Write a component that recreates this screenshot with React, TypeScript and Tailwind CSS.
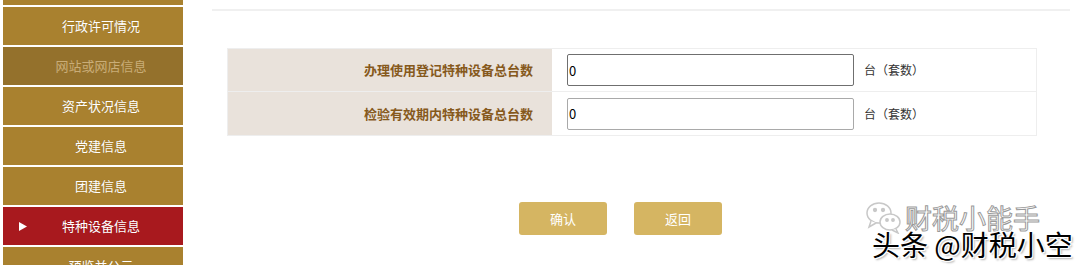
import React from "react";

const items = [
  { label: "年报基本信息", kind: "normal" },
  { label: "行政许可情况", kind: "normal" },
  { label: "网站或网店信息", kind: "disabled" },
  { label: "资产状况信息", kind: "normal" },
  { label: "党建信息", kind: "normal" },
  { label: "团建信息", kind: "normal" },
  { label: "特种设备信息", kind: "active" },
  { label: "预览并公示", kind: "normal" },
];

const font = { fontFamily: '"Microsoft YaHei", "Noto Sans CJK SC", "Noto Sans", sans-serif' };

function SideItem({ label, kind }: { label: string; kind: string }) {
  const bg =
    kind === "active" ? "bg-[#a8191e]" : kind === "disabled" ? "bg-[#94712c]" : "bg-[#a9812f]";
  const txt = kind === "disabled" ? "text-[#c9ad78]" : "text-white";
  return (
    <div className={`relative h-[38px] w-[180px] shrink-0 ${bg} flex items-center justify-center pl-[16px]`}>
      {kind === "active" && (
        <svg className="absolute left-[15px] top-[14px]" width="10" height="11" viewBox="0 0 10 11">
          <polygon points="1,1 9,5.5 1,10" fill="#ffffff" />
        </svg>
      )}
      <span className={`text-[13px] ${txt}`} style={{ textShadow: kind === "disabled" ? "none" : "0 0 1px rgba(0,0,0,0.15)" }}>
        {label}
      </span>
    </div>
  );
}

function Row({ label, dark }: { label: string; dark?: boolean }) {
  return (
    <div className="flex h-[43px] border-b border-[#eeeeee] last:border-b-0">
      <div className="w-[324px] shrink-0 bg-[#e9e2db] flex items-center justify-end pr-[19px]">
        <span className="text-[13px] font-bold text-[#86591c]">{label}</span>
      </div>
      <div className="flex items-center pl-[15px]">
        <input
          readOnly
          value="0"
          className={`h-[32px] w-[287px] border ${dark ? "border-[#6f6f6f]" : "border-[#a9a9a9]"} rounded-[2px] px-[1px] text-[13px] text-black outline-none bg-white`}
        />
        <span className="ml-[10px] text-[12px] text-[#333333]">台（套数）</span>
      </div>
    </div>
  );
}

export default function App() {
  return (
    <div className="relative w-[1080px] h-[265px] overflow-hidden bg-white flex" style={font}>
      <div className="w-[184px] shrink-0 pl-[3px] flex flex-col gap-[2px] -mt-[33px] bg-white">
        {items.map((it) => (
          <SideItem key={it.label} label={it.label} kind={it.kind} />
        ))}
      </div>
      <div className="flex-1 flex flex-col">
        <div className="ml-[28px] mr-[10px] mt-[9px] h-[2px] bg-[#f0f0f0]" />
        <div className="ml-[43px] mt-[37px] w-[810px] border border-[#eeeeee] flex flex-col">
          <Row label="办理使用登记特种设备总台数" dark />
          <Row label="检验有效期内特种设备总台数" />
        </div>
        <div className="ml-[335px] mt-[66px] flex gap-[27px]">
          <button className="w-[88px] h-[33px] rounded-[3px] bg-[#d5b562] text-white text-[13px]">确认</button>
          <button className="w-[88px] h-[33px] rounded-[3px] bg-[#d5b562] text-white text-[13px]">返回</button>
        </div>
      </div>

      <div className="absolute left-[864px] top-[200px] flex items-center">
        <svg width="40" height="34" viewBox="0 0 40 34" fill="none" stroke="#c8c8c8" strokeWidth="1.5">
          <ellipse cx="15" cy="13" rx="12" ry="10" fill="white" />
          <path d="M7 21 L5 27 L12 23" fill="white" />
          <ellipse cx="26" cy="22" rx="10" ry="8" fill="white" />
          <path d="M32 29 L34 33 L28 30" fill="white" />
          <circle cx="11" cy="10" r="1.4" fill="#c8c8c8" />
          <circle cx="19" cy="10" r="1.4" fill="#c8c8c8" />
          <circle cx="23" cy="20" r="1.2" fill="#c8c8c8" />
          <circle cx="29" cy="20" r="1.2" fill="#c8c8c8" />
        </svg>
        <span
          className="ml-[1px] text-[27px] leading-none text-white"
          style={{ WebkitTextStroke: "1px #9a9a9a" }}
        >
          财税小能手
        </span>
      </div>
      <div
        className="absolute left-[872px] top-[230px] text-[28px] leading-none text-black"
        style={{ textShadow: "1px 1px 0 #fff, -1px -1px 0 #fff, 1px -1px 0 #fff, -1px 1px 0 #fff, 2px 2px 2px rgba(0,0,0,0.3)" }}
      >
        头条 @财税小空
      </div>
    </div>
  );
}
